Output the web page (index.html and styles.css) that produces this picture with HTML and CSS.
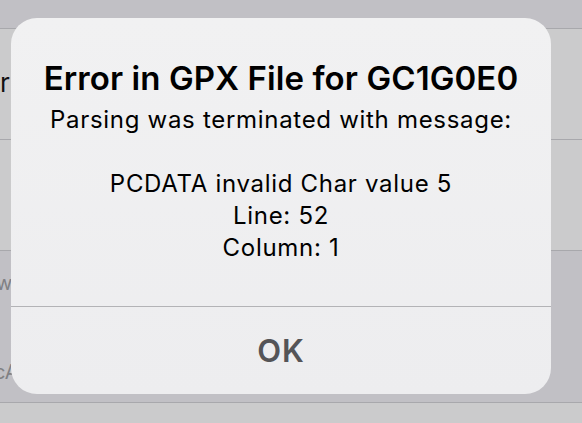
FILE: index.html
```html
<!DOCTYPE html>
<html lang="en">
<head>
  <meta charset="UTF-8" />
  <meta name="viewport" content="width=device-width, initial-scale=1.0"/>
  <title>Error in GPX File</title>
  <link rel="stylesheet" href="styles.css">
</head>
<body>
  <!-- dimmed list behind the alert -->
  <div class="screen">
    <div class="band band-top"></div>
    <div class="row"><span class="row-label">r</span></div>
    <div class="row"></div>
    <div class="band band-section">
      <span class="section-text">w</span>
      <span class="section-text section-bottom">cA</span>
    </div>
    <div class="row row-last"></div>
  </div>

  <!-- alert -->
  <div class="alert">
    <div class="alert-body">
      <h2 class="alert-title">Error in GPX File for GC1G0E0</h2>
      <p class="alert-message">Parsing was terminated with message:<br><br>PCDATA invalid Char value 5<br>Line: 52<br>Column: 1</p>
    </div>
    <button class="alert-button">OK</button>
  </div>
</body>
</html>
```

FILE: styles.css
```css
html, body {
  margin: 0;
  height: 100%;
  overflow: hidden;
}
body {
  font-family: Inter, "Noto Sans", sans-serif;
  background-color: #cbcbcc;
  position: relative;
}
.screen {
  display: flex;
  flex-direction: column;
}
.band {
  background-color: #c1c0c5;
  border-bottom: 1px solid #a8a8ac;
}
.band-top {
  height: 28px;
}
.row {
  height: 110px;
  background-color: #cbcbcc;
  border-bottom: 1px solid #a8a8ac;
  display: flex;
  align-items: center;
}
.row-label {
  font-size: 26px;
  color: #111;
  margin-top: -4px;
}
.band-section {
  height: 152px;
  display: flex;
  flex-direction: column;
  justify-content: space-between;
  padding: 20px 0 18px;
  box-sizing: border-box;
}
.section-text {
  font-size: 20px;
  color: #808084;
  line-height: 24px;
  margin-left: -4px;
}
.section-bottom {
  margin-left: -6px;
}
.row-last {
  height: 20px;
  border-bottom: none;
}
.alert {
  position: absolute;
  left: 11px;
  top: 18px;
  width: 540px;
  height: 376px;
  border-radius: 26px;
  background: linear-gradient(#f1f1f2, #ededef);
  display: flex;
  flex-direction: column;
  overflow: hidden;
}
.alert-body {
  padding: 40px 10px 42px;
  text-align: center;
  border-bottom: 1px solid #b3b3b6;
}
.alert-title {
  margin: 0 0 6px;
  font-size: 33px;
  line-height: 40px;
  font-weight: 600;
  color: #000;
  letter-spacing: 0.1px;
}
.alert-message {
  margin: 0;
  font-size: 24px;
  line-height: 32px;
  color: #000;
  letter-spacing: 0.7px;
}
.alert-button {
  flex: 1;
  border: none;
  background: transparent;
  font-family: inherit;
  font-size: 31px;
  font-weight: 600;
  color: #545457;
  letter-spacing: 1px;
  cursor: pointer;
}
```
